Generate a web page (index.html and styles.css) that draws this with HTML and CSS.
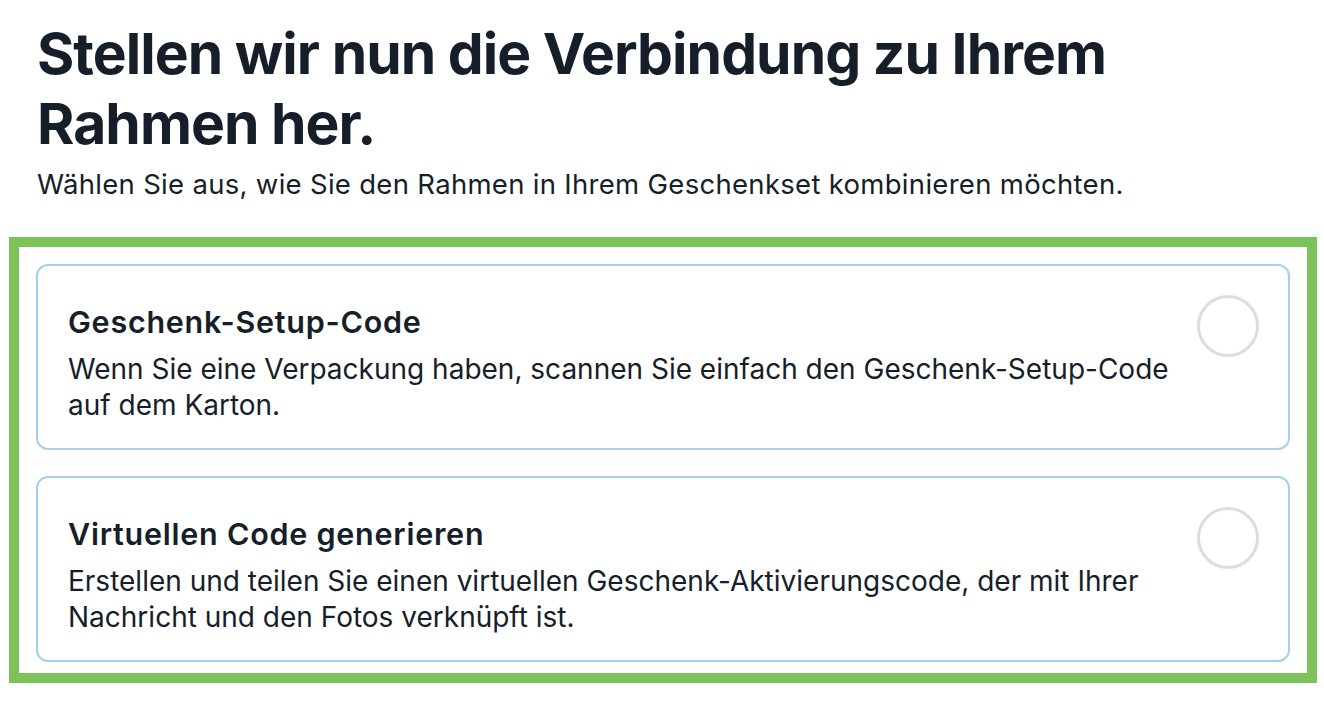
FILE: index.html
```html
<!DOCTYPE html>
<html lang="de">
<head>
<meta charset="utf-8">
<title>Verbindung</title>
<link rel="stylesheet" href="styles.css">
</head>
<body>
<main class="page">
  <h1 class="title">Stellen wir nun die Verbindung zu Ihrem Rahmen her.</h1>
  <p class="subtitle">Wählen Sie aus, wie Sie den Rahmen in Ihrem Geschenkset kombinieren möchten.</p>
  <section class="options">
    <div class="card">
      <div class="card-text">
        <h2 class="card-title">Geschenk-Setup-Code</h2>
        <p class="card-desc">Wenn Sie eine Verpackung haben, scannen Sie einfach den Geschenk-Setup-Code auf dem Karton.</p>
      </div>
      <span class="radio"></span>
    </div>
    <div class="card">
      <div class="card-text">
        <h2 class="card-title">Virtuellen Code generieren</h2>
        <p class="card-desc">Erstellen und teilen Sie einen virtuellen Geschenk-Aktivierungscode, der mit Ihrer Nachricht und den Fotos verknüpft ist.</p>
      </div>
      <span class="radio"></span>
    </div>
  </section>
</main>
</body>
</html>
```
FILE: styles.css
```css
html, body {
  margin: 0;
  padding: 0;
  background: #ffffff;
}
body {
  font-family: Inter, "Noto Sans", "Liberation Sans", sans-serif;
  color: #161e2a;
}
.page {
  padding: 19px 0 0 9px;
  width: 1308px;
}
.title {
  margin: 0 0 0 28px;
  font-size: 57px;
  line-height: 70px;
  font-weight: 700;
  letter-spacing: -0.95px;
  width: 1150px;
}
.subtitle {
  margin: 8px 0 0 28px;
  font-size: 27.5px;
  line-height: 34px;
  font-weight: 400;
  letter-spacing: 0.3px;
}
.options {
  margin-top: 36px;
  border: 10px solid #7bc25a;
  padding: 17px 17px 11px 17px;
  display: flex;
  flex-direction: column;
  gap: 26px;
}
.card {
  border: 2px solid #a6cfec;
  border-radius: 12px;
  height: 182px;
  display: flex;
  justify-content: space-between;
  align-items: flex-start;
  padding: 0 29px 0 30px;
}
.card-text {
  padding-top: 38px;
  max-width: 1120px;
}
.card-title {
  margin: 0;
  font-size: 30.5px;
  line-height: 36px;
  font-weight: 600;
  letter-spacing: 0.75px;
}
.card-desc {
  margin: 11px 0 0 0;
  font-size: 28px;
  line-height: 36px;
  font-weight: 400;
}
.radio {
  margin-top: 29px;
  width: 56px;
  height: 56px;
  border: 3px solid #dcdde0;
  border-radius: 50%;
  flex: none;
}
```
